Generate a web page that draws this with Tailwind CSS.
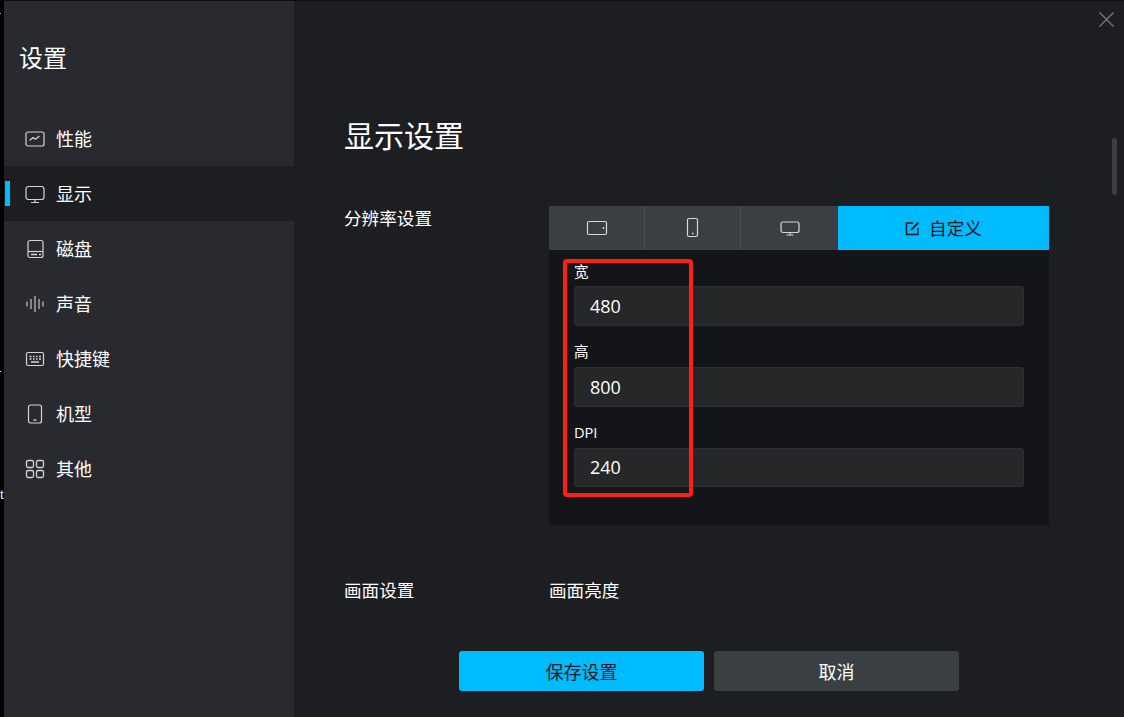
<!DOCTYPE html>
<html lang="zh-CN">
<head>
<meta charset="utf-8">
<script src="https://cdn.jsdelivr.net/npm/@tailwindcss/browser@4"></script>
<title>设置</title>
</head>
<body class="bg-black">
<div class="relative flex h-[717px] w-[1124px] overflow-hidden bg-[#1c1e22] font-['Noto_Sans_CJK_SC','Noto_Sans',sans-serif] text-white">
  <div class="relative w-1 shrink-0 bg-black">
    <span class="absolute left-0 top-[13px] h-px w-px bg-[#e8a040]"></span>
    <span class="absolute left-0 top-[371px] h-px w-px bg-white"></span>
    <span class="absolute left-0 top-[488px] w-[4px] overflow-hidden font-['Liberation_Sans',sans-serif] text-[13px] leading-[14px] text-white">t</span>
  </div>
  <aside class="flex w-[290px] shrink-0 flex-col bg-[#282a30] pt-px">
    <div class="flex h-[110px] items-start pl-[15px] pt-[36px] text-[24px] leading-[40px]">设置</div>
    <nav class="flex flex-col text-[18px]">
      <a class="flex h-[55px] items-center gap-[11px] pl-[21px]">
        <svg class="h-5 w-5" viewBox="0 0 20 20" fill="none" stroke="#d4d4d4" stroke-width="1.2"><rect x="1" y="3" width="18" height="14" rx="2"/><path d="M4.5 11.5 8 8.5l2.5 1.8L14.5 7"/></svg>
        <span>性能</span>
      </a>
      <a class="relative flex h-[55px] items-center gap-[11px] bg-[#1c1e22] pl-[21px]">
        <span class="absolute left-px top-[15px] h-[25px] w-[5px] bg-[#00bbff]"></span>
        <svg class="h-5 w-5" viewBox="0 0 20 20" fill="none" stroke="#d4d4d4" stroke-width="1.2"><rect x="1" y="2.5" width="18" height="13" rx="2.5"/><path d="M10 15.5v3M6 18.5h8"/></svg>
        <span>显示</span>
      </a>
      <a class="flex h-[55px] items-center gap-[11px] pl-[21px]">
        <svg class="h-5 w-5" viewBox="0 0 20 20" fill="none" stroke="#d4d4d4" stroke-width="1.2"><rect x="3" y="1.5" width="15" height="17" rx="2"/><path d="M3 12.5h15"/><path d="M6 15.5h6M14 15.5h2" stroke-width="1.6"/></svg>
        <span>磁盘</span>
      </a>
      <a class="flex h-[55px] items-center gap-[11px] pl-[21px]">
        <svg class="h-5 w-5" viewBox="0 0 20 20" fill="none" stroke="#c4c4c4" stroke-width="1.2"><path d="M2 7.5v5M6 5v10M10 2v16M14 5v10M18 7.5v5"/></svg>
        <span>声音</span>
      </a>
      <a class="flex h-[55px] items-center gap-[11px] pl-[21px]">
        <svg class="h-5 w-5" viewBox="0 0 20 20" fill="none" stroke="#d4d4d4" stroke-width="1.2"><rect x="1.5" y="3.5" width="17" height="13" rx="1.5"/><path d="M4.5 7.5h2M8 7.5h1.5M11 7.5h1.5M14 7.5h2M4.5 10h2M8 10h1.5M11 10h1.5M14 10h2M6 13h8" stroke-width="1.3"/></svg>
        <span>快捷键</span>
      </a>
      <a class="flex h-[55px] items-center gap-[11px] pl-[21px]">
        <svg class="h-5 w-5" viewBox="0 0 20 20" fill="none" stroke="#d4d4d4" stroke-width="1.2"><rect x="3.5" y="1" width="13" height="18" rx="2"/><path d="M8.5 16h3" stroke-width="1.4"/></svg>
        <span>机型</span>
      </a>
      <a class="flex h-[55px] items-center gap-[11px] pl-[21px]">
        <svg class="h-5 w-5" viewBox="0 0 20 20" fill="none" stroke="#d4d4d4" stroke-width="1.3"><rect x="1.5" y="1.5" width="7" height="7" rx="1.5"/><rect x="11.5" y="1.5" width="7" height="7" rx="1.5"/><rect x="1.5" y="11.5" width="7" height="7" rx="1.5"/><rect x="11.5" y="11.5" width="7" height="7" rx="1.5"/></svg>
        <span>其他</span>
      </a>
    </nav>
  </aside>
  <main class="relative flex min-w-0 flex-1 flex-col">
    <svg class="absolute right-[10px] top-[12px] h-[15px] w-[15px]" viewBox="0 0 15 15" fill="none" stroke="#6f7174" stroke-width="1.5"><path d="M.5.5l14 14M14.5.5l-14 14"/></svg>
    <div class="absolute right-[7px] top-[138px] h-[57px] w-[5px] rounded-full bg-[#3a3d42]"></div>
    <div class="flex-1 overflow-hidden pl-[50px] pt-[112px]">
      <h1 class="text-[30px] font-normal leading-[44px]">显示设置</h1>
      <div class="mt-[50px] flex">
        <div class="w-[205px] text-[17.6px] leading-[24px]">分辨率设置</div>
        <div class="w-[500px]">
          <div class="flex h-[44px] bg-[#3a3f43]">
            <div class="flex w-[96px] items-center justify-center border-r border-[#4b5054]">
              <svg class="h-[22px] w-[22px]" viewBox="0 0 22 22" fill="none" stroke="#d8d8d8" stroke-width="1.2"><rect x="1.5" y="4.5" width="19" height="13" rx="1.5"/><path d="M17.5 10v2" stroke-width="1.4"/></svg>
            </div>
            <div class="flex w-[96px] items-center justify-center border-r border-[#4b5054]">
              <svg class="h-[22px] w-[22px]" viewBox="0 0 22 22" fill="none" stroke="#d8d8d8" stroke-width="1.2"><rect x="5.5" y="1.5" width="10" height="18" rx="1.5"/><path d="M10 16.5h1.5" stroke-width="1.4"/></svg>
            </div>
            <div class="flex w-[97px] items-center justify-center">
              <svg class="h-[22px] w-[22px]" viewBox="0 0 22 22" fill="none" stroke="#d8d8d8" stroke-width="1.2"><rect x="2" y="5" width="18" height="10.5" rx="2"/><path d="M11 15.5v2.5M7.5 18h7"/></svg>
            </div>
            <div class="flex flex-1 items-center justify-center gap-[9px] bg-[#00bbff] text-[17.6px] text-[#10181c]">
              <svg class="h-[15px] w-[15px]" viewBox="0 0 15 15" fill="none" stroke="#10181c" stroke-width="1.4"><path d="M8 2H1.5v11.5H13V7"/><path d="M6 9l7.5-7.5" stroke-width="1.8"/></svg>
              <span>自定义</span>
            </div>
          </div>
          <div class="h-[275px] bg-[#141518] px-[25px] pt-[10px]">
            <div class="h-[22px] text-[14.6px] leading-[22px]">宽</div>
            <div class="mt-[4px] flex h-[40px] items-center rounded-[3px] border border-[#2e2f32] bg-[#262729] pl-[15px] font-['Open_Sans',sans-serif] text-[18px]">480</div>
            <div class="mt-[14px] h-[22px] text-[14.6px] leading-[22px]">高</div>
            <div class="mt-[5px] flex h-[40px] items-center rounded-[3px] border border-[#2e2f32] bg-[#262729] pl-[15px] font-['Open_Sans',sans-serif] text-[18px]">800</div>
            <div class="mt-[14px] h-[22px] font-['Open_Sans',sans-serif] text-[14.6px] leading-[22px]">DPI</div>
            <div class="mt-[5px] flex h-[39px] items-center rounded-[3px] border border-[#2e2f32] bg-[#262729] pl-[15px] font-['Open_Sans',sans-serif] text-[18px]">240</div>
          </div>
        </div>
      </div>
      <div class="mt-[52px] flex text-[17.6px] leading-[26px]">
        <div class="w-[205px]">画面设置</div>
        <div>画面亮度</div>
      </div>
    </div>
    <div class="flex h-[66px] shrink-0 justify-center gap-[10px] text-[18px]">
      <button class="h-[40px] w-[245px] rounded-[3px] bg-[#00bbff] text-[#10181c]">保存设置</button>
      <button class="h-[40px] w-[245px] rounded-[3px] bg-[#3a3f43] text-white">取消</button>
    </div>
    <div class="pointer-events-none absolute left-[269px] top-[259px] h-[238px] w-[130px] rounded-[4px] border-4 border-[#fe2015]"></div>
  </main>
  <div class="pointer-events-none absolute inset-x-0 top-0 h-px bg-[#0c0d0f]"></div>
</div>
</body>
</html>
